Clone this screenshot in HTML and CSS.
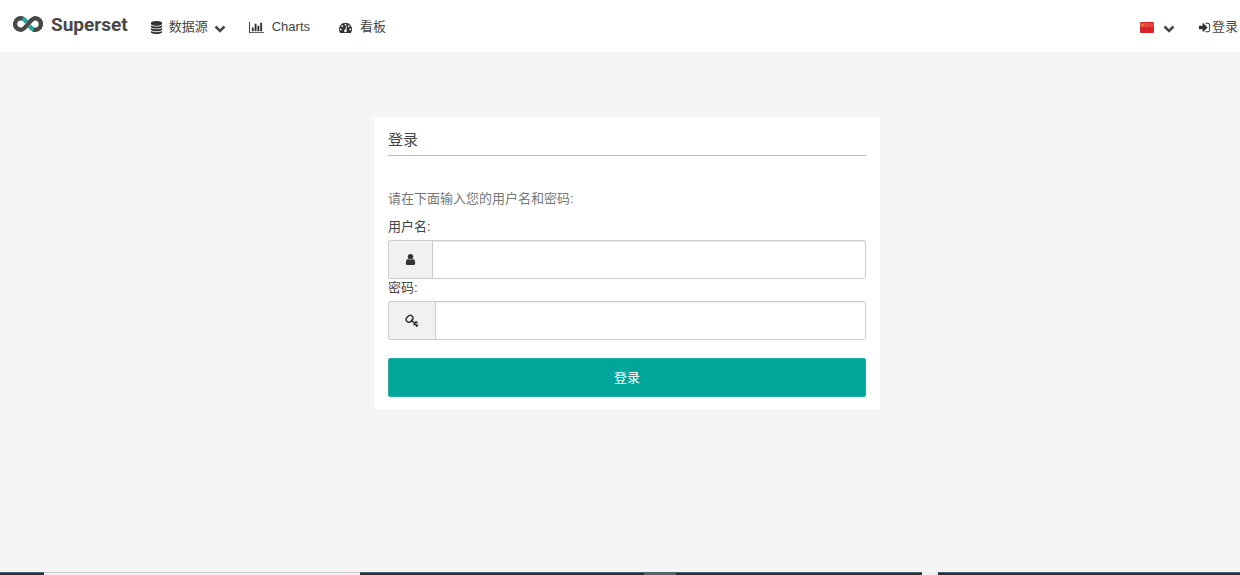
FILE: index.html
```
<!DOCTYPE html>
<html lang="zh-CN">

<head>
    <meta charset="UTF-8">
    <meta name="viewport" content="width=device-width, initial-scale=1">
    <title>Superset</title>
    <link rel="stylesheet" href="styles.css">
</head>

<body>
    <header class="navbar">
        <a class="brand" href="#">
            <svg class="brandMark" viewBox="0 0 30 18" aria-hidden="true">
                <g fill="none" stroke-width="4.4">
                    <path stroke="#484848" d="M10 3.600A5.800 5.800 0 1 0 8 14.800C13 14.800 17 3.200 22 3.200A5.800 5.800 0 1 1 20 14.400"/>
                    <path stroke="#20a7a0" d="M9.600 3.500C11.500 4.300 12.500 5.700 13.600 7.200M16.400 10.800C17.500 12.300 18.500 13.700 20.400 14.500"/>
                </g>
            </svg>
            <span>Superset</span>
        </a>
        <nav class="menu">
            <a class="menuItem" href="#">
                <svg class="icon" viewBox="0 0 1792 1792" aria-hidden="true"><path d="M896 768q237 0 443-43t325-127v170q0 69-103 128t-280 93.500-385 34.500-385-34.500-280-93.500-103-128v-170q119 84 325 127t443 43zm0 768q237 0 443-43t325-127v170q0 69-103 128t-280 93.500-385 34.500-385-34.500-280-93.500-103-128v-170q119 84 325 127t443 43zm0-384q237 0 443-43t325-127v170q0 69-103 128t-280 93.500-385 34.500-385-34.500-280-93.500-103-128v-170q119 84 325 127t443 43zm0-1152q208 0 385 34.500t280 93.500 103 128v128q0 69-103 128t-280 93.500-385 34.500-385-34.500-280-93.500-103-128v-128q0-69 103-128t280-93.500 385-34.500z"/></svg>
                <span>数据源</span>
                <svg class="caret" viewBox="0 0 12 8" aria-hidden="true"><path d="M1.500 1.500L6 6L10.500 1.500"/></svg>
            </a>
            <a class="menuItem" href="#">
                <svg class="icon wide" viewBox="0 0 2048 1792" aria-hidden="true"><path d="M640 896v512h-256v-512h256zm384-512v1024h-256v-1024h256zm1024 1152v128h-2048v-1536h128v1408h1920zm-640-896v768h-256v-768h256zm384-384v1152h-256v-1152h256z"/></svg>
                <span>Charts</span>
            </a>
            <a class="menuItem" href="#">
                <svg class="icon" viewBox="0 0 1792 1792" aria-hidden="true"><path d="M384 1152q0-53-37.500-90.500t-90.500-37.500-90.500 37.500-37.500 90.500 37.500 90.500 90.500 37.500 90.500-37.500 37.500-90.500zm192-448q0-53-37.500-90.500t-90.500-37.500-90.500 37.500-37.500 90.500 37.500 90.500 90.500 37.500 90.500-37.500 37.500-90.500zm428 481l101-382q6-26-7.500-48.500t-38.500-29.500-48 6.500-30 39.500l-101 382q-60 5-107 43.500t-63 98.500q-20 77 20 146t117 89 146-20 89-117q16-60-6-117t-72-91zm660-33q0-53-37.500-90.500t-90.500-37.500-90.500 37.500-37.500 90.500 37.500 90.500 90.500 37.500 90.500-37.500 37.500-90.500zm-640-640q0-53-37.500-90.500t-90.500-37.500-90.500 37.500-37.500 90.500 37.500 90.500 90.500 37.500 90.500-37.500 37.500-90.500zm448 192q0-53-37.500-90.500t-90.500-37.500-90.500 37.500-37.500 90.500 37.500 90.500 90.500 37.500 90.500-37.500 37.500-90.500zm320 448q0 261-141 483-19 29-54 29h-1402q-35 0-54-29-141-221-141-483 0-182 71-348t191-286 286-191 348-71 348 71 286 191 191 286 71 348z"/></svg>
                <span>看板</span>
            </a>
        </nav>
        <div class="account">
            <button class="language" type="button" aria-label="语言">
                <svg class="flag" viewBox="0 0 14 11" aria-hidden="true">
                    <rect width="14" height="11" rx="1" fill="#d9232a"/>
                    <path fill="#ea5a50" d="M0 1h14v4H0z" opacity=".6"/>
                    <path fill="#f08a2c" d="M2.500 1.500l.5 1.100h1.200l-.9.800.3 1.200-1.100-.7-1.100.7.3-1.200-.9-.8h1.200zM5 1h1v1H5zM6 3h1v1H6z"/>
                </svg>
                <svg class="caret" viewBox="0 0 12 8" aria-hidden="true"><path d="M1.500 1.500L6 6L10.500 1.500"/></svg>
            </button>
            <a class="signIn" href="#">
                <svg class="icon" viewBox="0 0 1792 1792" aria-hidden="true"><path d="M1312 896q0 26-19 45l-544 544q-19 19-45 19t-45-19-19-45v-288h-448q-26 0-45-19t-19-45v-384q0-26 19-45t45-19h448v-288q0-26 19-45t45-19 45 19l544 544q19 19 19 45zm352-352v704q0 119-84.500 203.500t-203.500 84.500h-320q-13 0-22.500-9.500t-9.500-22.500q0-4-1-20t-.5-26.500 3-23.500 10-19.500 20.500-6.500h320q66 0 113-47t47-113v-704q0-66-47-113t-113-47h-312l-11.500-1-11.500-3-8-5.500-7-9-2-13.500q0-4-1-20t-.5-26.500 3-23.500 10-19.500 20.500-6.500h320q119 0 203.500 84.500t84.500 203.500z"/></svg>
                <span>登录</span>
            </a>
        </div>
    </header>

    <main>
        <form class="panel">
            <h1>登录</h1>
            <p class="hint">请在下面输入您的用户名和密码:</p>
            <label for="username">用户名:</label>
            <div class="inputGroup">
                <span class="addon">
                    <svg class="icon" viewBox="0 0 1792 1792" aria-hidden="true"><path d="M1536 1399q0 109-62.500 187t-150.500 78h-854q-88 0-150.500-78t-62.500-187q0-85 8.500-160.500t31.500-152 58.500-131 94-89 134.500-34.500q131 128 313 128t313-128q76 0 134.500 34.500t94 89 58.500 131 31.500 152 8.500 160.500zm-256-887q0 159-112.500 271.500t-271.500 112.500-271.500-112.500-112.500-271.500 112.500-271.500 271.500-112.500 271.500 112.500 112.500 271.500z"/></svg>
                </span>
                <input id="username" name="username" type="text">
            </div>
            <label for="password">密码:</label>
            <div class="inputGroup">
                <span class="addon keyAddon">
                    <svg class="keyIcon" viewBox="0 0 14 14" aria-hidden="true">
                        <ellipse cx="4.600" cy="4.800" rx="3.700" ry="2.900" transform="rotate(-45 4.600 4.800)"/>
                        <path d="M6 5.800L11.800 11.600M8.600 11.200L10.200 9.600M11.200 12.800L13 10.800M9.600 9L11 7.800L12.600 9.200"/>
                    </svg>
                </span>
                <input id="password" name="password" type="password">
            </div>
            <button class="submit" type="submit">登录</button>
        </form>
    </main>

    <footer class="taskbar">
        <span class="dark start"></span>
        <span class="search"></span>
        <span class="dark apps"></span>
        <span class="activeApp"></span>
        <span class="dark windows"></span>
        <span class="trayGap"></span>
        <span class="dark tray"></span>
    </footer>
</body>

</html>
```
FILE: styles.css
```
* {
    box-sizing: border-box;
}
body {
    display: flex;
    flex-direction: column;
    min-height: 100vh;
    margin: 0;
    background: #f5f5f5;
    color: #444444;
    font-family: "Liberation Sans", Arial, "Noto Sans CJK SC", sans-serif;
    font-size: 13px;
    line-height: 18px;
}
a {
    color: inherit;
    text-decoration: none;
}
.navbar {
    display: flex;
    align-items: center;
    height: 53px;
    padding-top: 2px;
    padding-left: 13px;
    background: #ffffff;
    border-bottom: 1px solid #f0f0f0;
}
.brand {
    display: flex;
    align-items: center;
    gap: 8px;
    padding-bottom: 4px;
    color: #484848;
    font-family: Roboto, sans-serif;
    font-size: 19px;
    font-weight: bold;
}
.brandMark {
    width: 30px;
    height: 18px;
    margin-bottom: 2px;
}
.menu {
    display: flex;
    gap: 29px;
    margin-left: 22px;
}
.menuItem {
    display: flex;
    align-items: center;
    gap: 6px;
}
.menuItem:first-child {
    margin-right: -6px;
}
.menuItem:not(:first-child) {
    gap: 8px;
}
.icon {
    width: 13px;
    height: 13px;
    fill: #333333;
}
.icon.wide {
    width: 15px;
}
.caret {
    width: 12px;
    height: 8px;
    margin-top: 4px;
    fill: none;
    stroke: #484848;
    stroke-width: 2.6;
}
.account {
    display: flex;
    align-items: center;
    gap: 23px;
    margin-left: auto;
    padding-right: 2px;
}
.language {
    display: flex;
    align-items: center;
    gap: 9px;
    padding: 0;
    border: 0;
    background: none;
}
.flag {
    width: 14px;
    height: 11px;
}
.signIn {
    display: flex;
    align-items: center;
    gap: 1px;
}
main {
    flex: 1;
    padding: 64px 0 64px 14px;
}
.panel {
    width: 100%;
    max-width: 506px;
    margin: 0 auto;
    padding: 14px 14px 13px;
    background: #ffffff;
    border-radius: 2px;
    box-shadow: 0 1px 1px rgba(0, 0, 0, 0.05);
}
h1 {
    margin: 0 0 34px;
    padding-bottom: 6px;
    border-bottom: 1px solid #b8b8b8;
    font-size: 15px;
    font-weight: normal;
    line-height: 18px;
}
.hint {
    margin: 0 0 10px;
    color: #777777;
}
label {
    display: block;
    margin-bottom: 4px;
}
.inputGroup {
    display: flex;
    height: 39px;
    border: 1px solid #cccccc;
    border-radius: 2px;
}
.addon {
    display: flex;
    align-items: center;
    justify-content: center;
    width: 44px;
    background: #f1f1f1;
    border-right: 1px solid #cccccc;
}
.keyAddon {
    width: 47px;
}
.keyIcon {
    width: 14px;
    height: 14px;
    fill: none;
    stroke: #333333;
    stroke-width: 1.5;
}
input {
    flex: 1;
    min-width: 0;
    padding: 8px 12px;
    border: 0;
    outline: none;
    background: #ffffff;
    box-shadow: inset 0 1px 1px rgba(0, 0, 0, 0.08);
    font: inherit;
}
.submit {
    display: block;
    width: 100%;
    height: 39px;
    margin-top: 18px;
    border: 1px solid #1faea4;
    border-radius: 2px;
    background: #00a699;
    color: #ffffff;
    font: inherit;
}
.taskbar {
    display: flex;
    height: 3px;
}
.dark {
    background: #21323f;
    border-top: 1px solid #4b5d68;
}
.start {
    flex: 44;
}
.search {
    flex: 316;
    background: #f0f0f0;
    border-top: 1px solid #c8c8c8;
}
.apps {
    flex: 284;
}
.activeApp {
    flex: 32;
    background: #56656b;
}
.windows {
    flex: 246;
}
.trayGap {
    flex: 16;
    background: #f0f0f0;
}
.tray {
    flex: 302;
}
```
